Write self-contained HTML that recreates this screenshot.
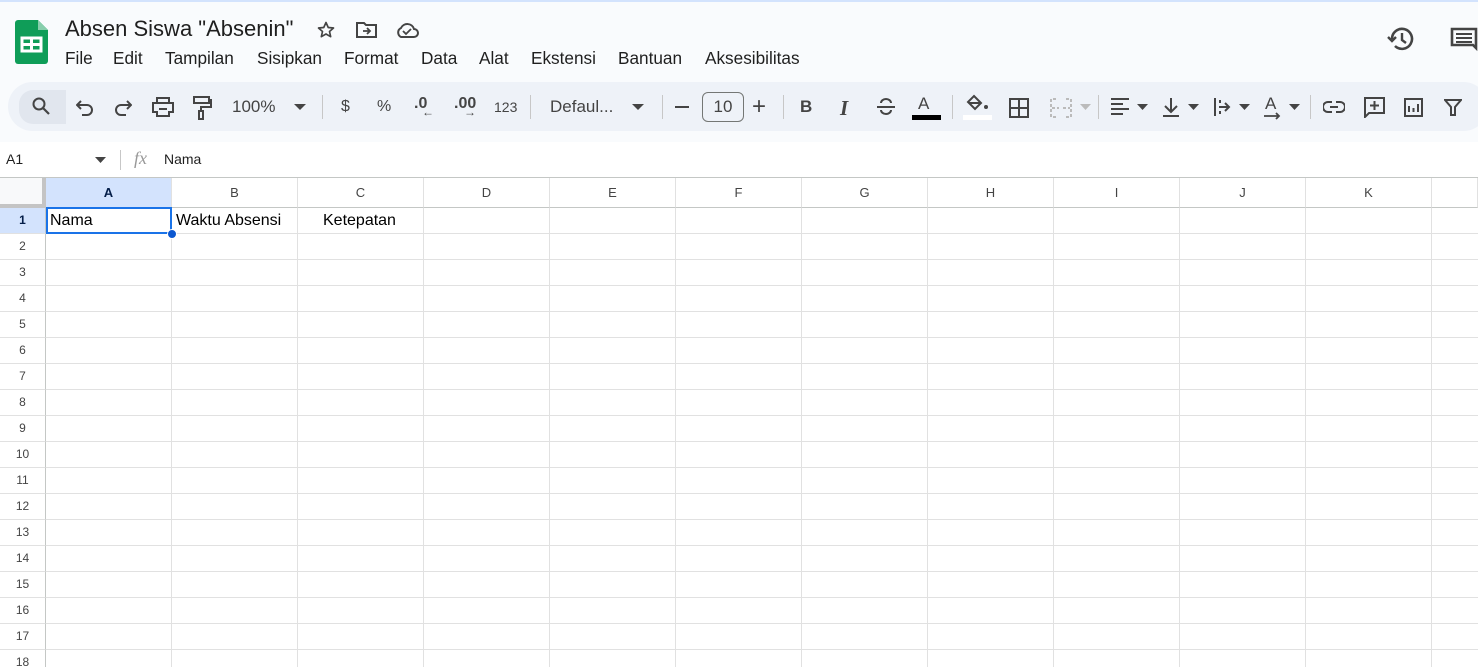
<!DOCTYPE html>
<html style="overflow:hidden;height:667px"><head><meta charset="utf-8"><style>
*{margin:0;padding:0;box-sizing:border-box}
body{width:1478px;height:667px;overflow:hidden;background:#f9fbfd;font-family:"Liberation Sans",Arial,sans-serif;position:relative;color:#1f1f1f}
.a{position:absolute}
.menu span{position:absolute;top:48px;font-size:17.2px;color:#1f1f1f}
.tb{left:8px;top:82px;width:1480px;height:49px;background:#eef2f8;border-radius:25px}
.ic{position:absolute;top:96px}
.sep{position:absolute;top:95px;width:1px;height:24px;background:#c7c7c7}
.t{position:absolute;font-size:17px;color:#444}
.colh{position:absolute;top:178px;height:30px;border-right:1px solid #e1e1e1;border-bottom:1px solid #c4c7c5;background:#fff;font-size:13px;color:#444;text-align:center;line-height:29px}
.rowh{position:absolute;left:0;width:46px;height:26px;border-bottom:1px solid #e1e1e1;border-right:1px solid #c4c7c5;background:#fff;font-size:12px;color:#444;text-align:center;line-height:25px}
</style></head><body>
<div class="a" style="left:0;top:0;width:1478px;height:2px;background:#d3e3fd"></div>
<svg class="a" style="left:15px;top:20px" width="33" height="44" viewBox="0 0 33 44"><path d="M3 0h20l10 10v31a3 3 0 0 1-3 3H3a3 3 0 0 1-3-3V3a3 3 0 0 1 3-3z" fill="#0f9d58"/><path d="M23 0v10h10z" fill="#87ceac"/><rect x="7" y="18" width="19" height="13" fill="none" stroke="#fff" stroke-width="3"/><path d="M16.5 18v13M7 24.5h19" stroke="#fff" stroke-width="3"/></svg>
<div class="a" style="left:65px;top:16px;font-size:22px;color:#1f1f1f">Absen Siswa "Absenin"</div>
<svg class="a" style="left:316px;top:20px" width="20" height="20" viewBox="0 0 24 24"><path d="M12 3l2.7 6 6.3.6-4.8 4.2 1.4 6.2L12 16.8 6.4 20l1.4-6.2L3 9.6 9.3 9z" fill="none" stroke="#444" stroke-width="2" stroke-linejoin="round"/></svg>
<svg class="a" style="left:356px;top:21px" width="22" height="18" viewBox="0 0 22 18"><path d="M1 2h7l2 2h10v12H1z" fill="none" stroke="#444" stroke-width="2"/><path d="M7 10h7M11 7l3 3-3 3" fill="none" stroke="#444" stroke-width="1.8"/></svg>
<svg class="a" style="left:395px;top:21px" width="24" height="18" viewBox="0 0 24 18"><path d="M6 16h13a4 4 0 0 0 0-8 7 7 0 0 0-13-1 5 5 0 0 0 0 9z" fill="none" stroke="#444" stroke-width="2"/><path d="M8 10l3 3 5-5" fill="none" stroke="#444" stroke-width="1.8"/></svg>
<div class="menu"><span style="left:65px">File</span><span style="left:113px">Edit</span><span style="left:165px">Tampilan</span><span style="left:257px">Sisipkan</span><span style="left:344px">Format</span><span style="left:421px">Data</span><span style="left:479px">Alat</span><span style="left:531px">Ekstensi</span><span style="left:618px">Bantuan</span><span style="left:705px">Aksesibilitas</span></div>
<svg class="a" style="left:1387px;top:26px" width="28" height="26" viewBox="0 0 28 26"><path d="M5 13a10 10 0 1 1 3 7" fill="none" stroke="#444" stroke-width="2.6"/><path d="M1 11l4 4 4-4" fill="none" stroke="#444" stroke-width="2.4"/><path d="M15 7v7l4 3" fill="none" stroke="#444" stroke-width="2.4"/></svg>
<svg class="a" style="left:1450px;top:27px" width="28" height="26" viewBox="0 0 28 26"><path d="M2 2h24v19l-3-3H2z" fill="none" stroke="#444" stroke-width="2.6"/><path d="M6 7h16M6 11h16M6 15h16" stroke="#444" stroke-width="2"/></svg>
<div class="a tb"></div>
<div class="a" style="left:19px;top:90px;width:47px;height:34px;background:#e1e6ee;border-radius:14px 0 0 14px"></div>
<svg class="ic" style="left:31px" width="20" height="20" viewBox="0 0 20 20"><circle cx="8" cy="8" r="5.5" fill="none" stroke="#444" stroke-width="2"/><path d="M12 12l6 6" stroke="#444" stroke-width="2.2"/></svg>
<svg class="ic" style="left:76px;top:98px" width="18" height="18" viewBox="0 0 18 18"><path d="M5 3L1 7l4 4" fill="none" stroke="#444" stroke-width="2"/><path d="M1 7h10a5 5 0 0 1 0 10H6" fill="none" stroke="#444" stroke-width="2"/></svg>
<svg class="ic" style="left:114px;top:98px" width="18" height="18" viewBox="0 0 18 18"><path d="M13 3l4 4-4 4" fill="none" stroke="#444" stroke-width="2"/><path d="M17 7H7a5 5 0 0 0 0 10h5" fill="none" stroke="#444" stroke-width="2"/></svg>
<svg class="ic" style="left:152px;top:97px" width="22" height="20" viewBox="0 0 22 20"><path d="M5 1h12v5H5zM1 6h20v9h-4v4H5v-4H1z" fill="none" stroke="#444" stroke-width="2"/><path d="M7 12h8" stroke="#444" stroke-width="2"/></svg>
<svg class="ic" style="left:192px" width="20" height="24" viewBox="0 0 20 24"><path d="M2 1h15v6H2zM17 4h2v7H9v4M7 15h4v8H7z" fill="none" stroke="#444" stroke-width="2"/></svg>
<div class="t" style="left:232px;top:97px">100%</div>
<svg class="ic" style="left:294px;top:104px" width="12" height="7"><path d="M0 0h12L6 6z" fill="#444"/></svg>
<div class="sep" style="left:322px"></div>
<div class="t" style="left:341px;top:98px;font-size:16px">$</div>
<div class="t" style="left:377px;top:98px;font-size:16px">%</div>
<div class="t" style="left:414px;top:95px;font-size:16px;font-weight:bold">.0</div>
<div class="t" style="left:422px;top:105px;font-size:12px">←</div>
<div class="t" style="left:454px;top:95px;font-size:16px;font-weight:bold">.00</div>
<div class="t" style="left:464px;top:105px;font-size:12px">→</div>
<div class="t" style="left:494px;top:99px;font-size:14px">123</div>
<div class="sep" style="left:530px"></div>
<div class="t" style="left:550px;top:97px">Defaul...</div>
<svg class="ic" style="left:632px;top:104px" width="12" height="7"><path d="M0 0h12L6 6z" fill="#444"/></svg>
<div class="sep" style="left:662px"></div>
<div class="a" style="left:675px;top:106px;width:14px;height:2px;background:#444"></div>
<div class="a" style="left:702px;top:92px;width:42px;height:30px;border:1px solid #747775;border-radius:6px;text-align:center;line-height:28px;font-size:17px;color:#444">10</div>
<div class="t" style="left:752px;top:93px;font-size:24px">+</div>
<div class="sep" style="left:783px"></div>
<div class="t" style="left:800px;top:97px;font-weight:bold">B</div>
<div class="t" style="left:840px;top:96px;font-style:italic;font-family:'Liberation Serif',serif;font-size:21px;font-weight:bold">I</div>
<svg class="ic" style="left:876px;top:97px" width="20" height="20" viewBox="0 0 20 20"><path d="M1 10h18M5 6a5 4 0 0 1 10 0M5 13a5 4 0 0 0 10 0" fill="none" stroke="#444" stroke-width="2"/></svg>
<div class="t" style="left:918px;top:94px">A</div>
<div class="a" style="left:912px;top:115px;width:29px;height:5px;background:#000"></div>
<div class="sep" style="left:952px"></div>
<svg class="ic" style="left:966px;top:94px" width="24" height="18" viewBox="0 0 24 18"><path d="M8 2l7 7-6 6-7-7z" fill="none" stroke="#444" stroke-width="2"/><path d="M3 9h12" stroke="#444" stroke-width="2"/><circle cx="20" cy="13" r="2" fill="#444"/></svg>
<div class="a" style="left:963px;top:115px;width:29px;height:5px;background:#fff"></div>
<svg class="ic" style="left:1009px;top:98px" width="20" height="20" viewBox="0 0 20 20"><path d="M1 1h18v18H1zM10 1v18M1 10h18" fill="none" stroke="#444" stroke-width="2"/></svg>
<svg class="ic" style="left:1050px;top:98px" width="22" height="20" viewBox="0 0 22 20"><path d="M6 1H1v18h5M16 1h5v18h-5M2 10h7M13 10h7" fill="none" stroke="#bbb" stroke-width="2" stroke-dasharray="3 2"/></svg>
<svg class="ic" style="left:1080px;top:104px" width="11" height="6"><path d="M0 0h11L5.5 6z" fill="#bbb"/></svg>
<div class="sep" style="left:1098px"></div>
<svg class="ic" style="left:1110px;top:98px" width="20" height="18" viewBox="0 0 20 18"><path d="M1 1h18M1 6h12M1 11h18M1 16h12" stroke="#444" stroke-width="2"/></svg>
<svg class="ic" style="left:1137px;top:104px" width="11" height="6"><path d="M0 0h11L5.5 6z" fill="#444"/></svg>
<svg class="ic" style="left:1162px;top:97px" width="18" height="20" viewBox="0 0 18 20"><path d="M9 1v13M3 9l6 6 6-6M1 19h16" fill="none" stroke="#444" stroke-width="2"/></svg>
<svg class="ic" style="left:1188px;top:104px" width="11" height="6"><path d="M0 0h11L5.5 6z" fill="#444"/></svg>
<svg class="ic" style="left:1213px;top:97px" width="20" height="20" viewBox="0 0 20 20"><path d="M2 1v18M6 10h9M12 6l4 4-4 4M7 3v3M7 14v3" fill="none" stroke="#444" stroke-width="2"/></svg>
<svg class="ic" style="left:1239px;top:104px" width="11" height="6"><path d="M0 0h11L5.5 6z" fill="#444"/></svg>
<div class="t" style="left:1265px;top:94px">A</div>
<svg class="ic" style="left:1264px;top:112px" width="18" height="8"><path d="M0 4h15M12 1l3 3-3 3" fill="none" stroke="#444" stroke-width="1.8"/></svg>
<svg class="ic" style="left:1289px;top:104px" width="11" height="6"><path d="M0 0h11L5.5 6z" fill="#444"/></svg>
<div class="sep" style="left:1310px"></div>
<svg class="ic" style="left:1323px;top:101px" width="22" height="12" viewBox="0 0 22 12"><path d="M9 1H5a5 5 0 0 0 0 10h4M13 1h4a5 5 0 0 1 0 10h-4M7 6h8" fill="none" stroke="#444" stroke-width="2"/></svg>
<svg class="ic" style="left:1364px;top:97px" width="21" height="21" viewBox="0 0 21 21"><path d="M1 1h19v15H5l-4 4z" fill="none" stroke="#444" stroke-width="2"/><path d="M10.5 4v9M6 8.5h9" stroke="#444" stroke-width="2"/></svg>
<svg class="ic" style="left:1404px;top:98px" width="19" height="19" viewBox="0 0 19 19"><path d="M1 1h17v17H1z" fill="none" stroke="#444" stroke-width="2"/><path d="M5 8v6M9.5 10v4M14 6v8" stroke="#444" stroke-width="2"/></svg>
<svg class="ic" style="left:1444px;top:99px" width="18" height="17" viewBox="0 0 18 17"><path d="M1 1h16l-6 7v8H7V8z" fill="none" stroke="#444" stroke-width="2"/></svg>
<div class="a" style="left:0;top:142px;width:1478px;height:36px;background:#fff;border-bottom:1px solid #c4c7c5"></div>
<div class="a" style="left:6px;top:151px;font-size:14px">A1</div>
<svg class="a" style="left:95px;top:157px" width="11" height="6"><path d="M0 0h11L5.5 6z" fill="#444"/></svg>
<div class="a" style="left:120px;top:150px;width:1px;height:20px;background:#c7c7c7"></div>
<div class="a" style="left:134px;top:148px;font-size:18px;font-style:italic;font-family:'Liberation Serif',serif;color:#999">fx</div>
<div class="a" style="left:164px;top:151px;font-size:14px">Nama</div>
<div class="a" style="left:0;top:208px;width:1478px;height:459px;background:#fff;
background-image:linear-gradient(to right,#e1e1e1 1px,transparent 1px),linear-gradient(to bottom,#e1e1e1 1px,transparent 1px);
background-size:126px 26px;background-position:45px 25px"></div>
<div class="a" style="left:0;top:178px;width:46px;height:30px;background:#f8f9fa;border-right:4px solid #c4c4c4;border-bottom:4px solid #c4c4c4"></div>
<div class="colh" style="left:46px;width:126px;background:#d3e3fd;font-weight:bold;color:#041e49">A</div>
<div class="colh" style="left:172px;width:126px">B</div>
<div class="colh" style="left:298px;width:126px">C</div>
<div class="colh" style="left:424px;width:126px">D</div>
<div class="colh" style="left:550px;width:126px">E</div>
<div class="colh" style="left:676px;width:126px">F</div>
<div class="colh" style="left:802px;width:126px">G</div>
<div class="colh" style="left:928px;width:126px">H</div>
<div class="colh" style="left:1054px;width:126px">I</div>
<div class="colh" style="left:1180px;width:126px">J</div>
<div class="colh" style="left:1306px;width:126px">K</div>
<div class="colh" style="left:1432px;width:46px"></div>
<div class="rowh" style="top:208px;background:#d3e3fd;font-weight:bold;color:#041e49">1</div>
<div class="rowh" style="top:234px">2</div>
<div class="rowh" style="top:260px">3</div>
<div class="rowh" style="top:286px">4</div>
<div class="rowh" style="top:312px">5</div>
<div class="rowh" style="top:338px">6</div>
<div class="rowh" style="top:364px">7</div>
<div class="rowh" style="top:390px">8</div>
<div class="rowh" style="top:416px">9</div>
<div class="rowh" style="top:442px">10</div>
<div class="rowh" style="top:468px">11</div>
<div class="rowh" style="top:494px">12</div>
<div class="rowh" style="top:520px">13</div>
<div class="rowh" style="top:546px">14</div>
<div class="rowh" style="top:572px">15</div>
<div class="rowh" style="top:598px">16</div>
<div class="rowh" style="top:624px">17</div>
<div class="rowh" style="top:650px;height:17px;border-bottom:none">18</div>
<div class="a" style="left:46px;top:207px;width:126px;height:27px;border:2px solid #1a73e8"></div>
<div class="a" style="left:167px;top:229px;width:10px;height:10px;border-radius:50%;background:#0b57d0;border:1px solid #fff"></div>
<div class="a" style="left:50px;top:212px;font-size:16px;color:#000">Nama</div>
<div class="a" style="left:176px;top:212px;font-size:16px;color:#000">Waktu Absensi</div>
<div class="a" style="left:323px;top:212px;font-size:16px;color:#000">Ketepatan</div>
</body></html>
